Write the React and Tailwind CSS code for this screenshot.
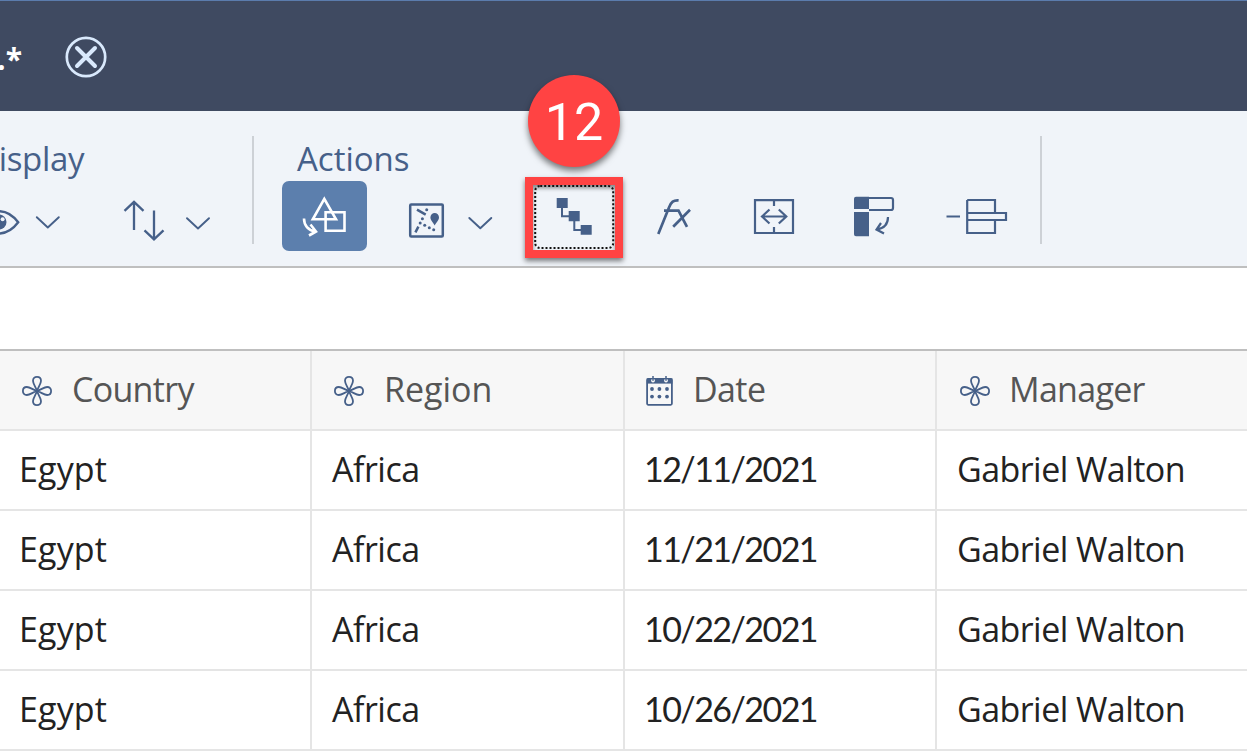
const NAVY = "#466089";

function Glyph({ x, w, y = 181, h = 70, color = NAVY, sw = 2.4, children }) {
  return (
    <svg
      width={w}
      height={h}
      viewBox={`${x} ${y} ${w} ${h}`}
      className="block shrink-0"
      fill="none"
      stroke={color}
      strokeWidth={sw}
    >
      {children}
    </svg>
  );
}

function Chevron({ x, w, cx, top }) {
  return (
    <Glyph x={x} w={w} sw={1.9}>
      <path d={`M${cx - 11} ${top}L${cx} ${top + 10.3}L${cx + 11} ${top}`} strokeLinecap="round" strokeLinejoin="round" />
    </Glyph>
  );
}

function Dimension() {
  return (
    <svg width="30" height="30" viewBox="0 0 30 30" className="mt-[1px] block shrink-0" fill="none" stroke={NAVY} strokeWidth="1.8">
      {[0, 90, 180, 270].map((a) => (
        <path key={a} transform={`rotate(${a} 15 15)`} d="M15 15C13.6 10.6 11 8 11 4.8C11 2.4 12.6 0.9 15 0.9C17.4 0.9 19 2.4 19 4.8C19 8 16.4 10.6 15 15Z" />
      ))}
      <circle cx="15" cy="15" r="1.6" fill={NAVY} stroke="none" />
    </svg>
  );
}

function Calendar() {
  return (
    <svg width="28" height="30" viewBox="0 0 28 30" className="mt-[1px] block shrink-0">
      <rect x="1.1" y="3" width="24.8" height="25.8" rx="1.2" fill="none" stroke={NAVY} strokeWidth="1.8" />
      <path d="M0.8 2.4H26.4V7.6H0.8Z" fill={NAVY} />
      {[7, 20].map((x) => (
        <g key={x}>
          <circle cx={x} cy="4.6" r="1.9" fill="#f7f7f7" />
          <path d={`M${x} 0V4.8`} stroke={NAVY} strokeWidth="1.5" />
        </g>
      ))}
      {[13, 20.6].map((y) => [6, 13.4, 21].map((x) => <circle key={`${x}-${y}`} cx={x} cy={y} r="1.9" fill={NAVY} />))}
    </svg>
  );
}

const columns = [
  {
    name: "Country",
    icon: Dimension,
    box: "w-[312px] border-r-2",
    head: "gap-[20px] pl-[22px] tracking-[-0.7px]",
    cell: "pl-[19px] tracking-[0.15px]",
  },
  {
    name: "Region",
    icon: Dimension,
    box: "w-[313px] border-r-2",
    head: "gap-[20px] pl-[22px]",
    cell: "pl-[20px] tracking-[-0.5px]",
  },
  {
    name: "Date",
    icon: Calendar,
    box: "w-[312px] border-r-2",
    head: "gap-[19px] pl-[21px] tracking-[-0.6px]",
    cell: "pl-[19px] font-['Lato',sans-serif] tracking-[-1.55px]",
  },
  {
    name: "Manager",
    icon: Dimension,
    box: "w-[312px]",
    head: "gap-[19px] pl-[23px] tracking-[-0.7px]",
    cell: "pl-[20px] tracking-[-0.55px]",
  },
];

const rows = ["12/11/2021", "11/21/2021", "10/22/2021", "10/26/2021"].map((d) => ["Egypt", "Africa", d, "Gabriel Walton"]);

export default function App() {
  return (
    <div className="h-[753px] w-[1247px] overflow-hidden bg-white font-['Open_Sans',sans-serif] text-[34px] leading-none">
      <header className="flex h-[111px] items-center border-t border-[#5b7cad] bg-[#3f4a61] pt-[2px]">
        <div className="flex w-[65px] justify-end overflow-hidden pt-[4px] pr-[43px] text-[30px] font-bold text-white">
          <span className="whitespace-nowrap">.*</span>
        </div>
        <svg width="42" height="42" viewBox="65 36.5 42 42" className="block" fill="none" stroke="#d9e9fc">
          <circle cx="86" cy="57.5" r="19.2" strokeWidth="2.7" />
          <path d="M77 48.5L95 66.5M95 48.5L77 66.5" strokeWidth="4" strokeLinecap="round" />
        </svg>
      </header>

      <section className="flex h-[157px] border-b-2 border-[#bfbfbf] bg-[#f0f4f9] text-[#466089]">
        <div className="w-[252px] overflow-hidden">
          <div className="flex h-[70px] items-center pt-[25px]">
            <span className="-ml-[25px] text-[33px] tracking-[-0.3px]">Display</span>
          </div>
          <div className="flex h-[70px]">
            <Glyph x={0} w={28}>
              <path d="M-21 222.3C-9 207.5 7 207.5 18.2 222.3C7 237.2 -9 237.2 -21 222.3Z" />
              <circle cx="-1" cy="222" r="7.5" fill={NAVY} stroke="none" />
              <circle cx="2.6" cy="219.3" r="2" fill="#f0f4f9" stroke="none" />
            </Glyph>
            <Chevron x={28} w={56} cx={47.8} top={217.2} />
            <Glyph x={84} w={90} sw={2.3}>
              <path d="M134 230V202M124.5 210.8L134 201.8L143.5 210.8M154 210.5V239M144.5 230.3L154 239.3L163.5 230.3" />
            </Glyph>
            <Chevron x={174} w={78} cx={198} top={218.2} />
          </div>
        </div>
        <div className="mt-[25px] h-[108px] w-[2px] bg-[#cdd1d6]" />
        <div className="flex w-[786px] flex-col">
          <div className="flex h-[70px] items-center pt-[25px] pl-[43px] text-[33px]">
            <span>Actions</span>
          </div>
          <div className="flex h-[70px] pl-[28px]">
            <button className="h-[70px] w-[85px] overflow-hidden rounded-[7px] bg-[#5c7fad]">
              <Glyph x={282} w={85} color="#fff" sw={2.6}>
                <path d="M324.3 198.8L312.8 219.3H336Z" />
                <path d="M325.6 212.3H344.5V230.7H325.6Z" />
                <path d="M304 218.5C304 225 308 230.5 315.5 231.5M310.5 224.5L316 231.5L309 235.5" />
              </Glyph>
            </button>
            <Glyph x={367} w={88} sw={2.5}>
              <rect x="410.2" y="204.5" width="32.6" height="32" rx="1" />
              <path d="M417 209.6L425.7 214.6M418.4 226.7L415.4 232.3" />
              <path d="M430.4 217.4A4.3 4.3 0 0 1 439 217.4C439 220.3 436 222.3 434.7 225.5C433.4 222.3 430.4 220.3 430.4 217.4Z" fill={NAVY} stroke="none" />
              <g fill={NAVY} stroke="none">
                <circle cx="426.7" cy="209.7" r="1.5" />
                <circle cx="422.4" cy="218.7" r="1.5" />
                <circle cx="420.2" cy="223" r="1.5" />
                <circle cx="424.7" cy="225.3" r="1.5" />
                <circle cx="429.3" cy="227.7" r="1.5" />
                <circle cx="433.7" cy="229.8" r="1.5" />
              </g>
            </Glyph>
            <Chevron x={455} w={70} cx={480.3} top={218} />
            <div className="relative -mt-[4px] h-[81px] w-[98px] shrink-0 border-8 border-[#ff4343] shadow-[0_3px_5px_rgba(0,0,0,0.5)]">
              <div className="h-[65px] w-[82px] pl-[1px] shadow-[inset_0_3px_4px_rgba(0,0,0,0.45)]">
                <Glyph x={534} y={185} w={81} h={65} sw={2}>
                  <rect x="535.2" y="186" width="78" height="62" rx="5" stroke="#111" strokeDasharray="2 2" />
                  <path d="M562 207V216.2H570M574.3 220V230H582" />
                  <path d="M556.7 198H567.7V208H556.7ZM568.7 211H579.7V221.3H568.7ZM580.7 225H591.7V234.8H580.7Z" fill={NAVY} stroke="none" />
                </Glyph>
              </div>
              <div className="absolute -top-[110px] -left-[5px] flex h-[92px] w-[92px] items-center justify-center rounded-full bg-[#ff4343] pt-[3px] font-['Roboto',sans-serif] text-[52px] text-white shadow-[0_4px_6px_rgba(0,0,0,0.5)]">
                12
              </div>
            </div>
            <Glyph x={623} w={97} sw={2.7}>
              <path d="M658.3 234L669 207.5C671.2 201.8 673.5 200 678.6 200.4M664 210.7H678.5L687 226.8M673.2 226.8L690 209.8" />
            </Glyph>
            <Glyph x={720} w={100} sw={2.2}>
              <path d="M755 200.2H793V233H755ZM774 200V206M774 227V233M762 216.5H787M769.5 209.5L762 216.5L769.5 223.5M778.8 209.5L786.3 216.5L778.8 223.5" />
            </Glyph>
            <Glyph x={820} w={110} sw={2.2}>
              <path d="M869 198H891Q893 198 893 200V208Q893 210 891 210H869" />
              <path d="M856 196.8H869V209H854V198.8Q854 196.8 856 196.8ZM854 212H869V236.2H856Q854 236.2 854 234.2Z" fill={NAVY} stroke="none" />
              <path d="M888 217C888 224 884 228.5 876.5 229.5M881 223L876.5 229.5L884 233.5" />
            </Glyph>
            <Glyph x={930} w={110} sw={2.2}>
              <path d="M946.5 216.5H960M967.2 200H995V213M995 220V233H967.2V200M967.2 213H1006V220H967.2Z" />
            </Glyph>
          </div>
        </div>
        <div className="mt-[25px] h-[108px] w-[2px] bg-[#cdd1d6]" />
      </section>

      <div className="h-[81px]" />

      <main className="border-t-2 border-[#bfbfbf]">
        <div className="flex h-[80px] border-b-2 border-[#e5e5e5] bg-[#f7f7f7] text-[#555]">
          {columns.map(({ name, icon: Icon, box, head }) => (
            <div key={name} className={`flex shrink-0 items-center border-[#e5e5e5] ${box} ${head}`}>
              <Icon />
              <span className="pb-[2px]">{name}</span>
            </div>
          ))}
        </div>
        {rows.map((row, r) => (
          <div key={r} className="flex h-[80px] border-b-2 border-[#e5e5e5] text-[#222]">
            {row.map((text, c) => (
              <div key={c} className={`flex shrink-0 items-center border-[#e5e5e5] whitespace-nowrap ${columns[c].box} ${columns[c].cell}`}>
                <span className="pb-[2px]">{text}</span>
              </div>
            ))}
          </div>
        ))}
      </main>
    </div>
  );
}
